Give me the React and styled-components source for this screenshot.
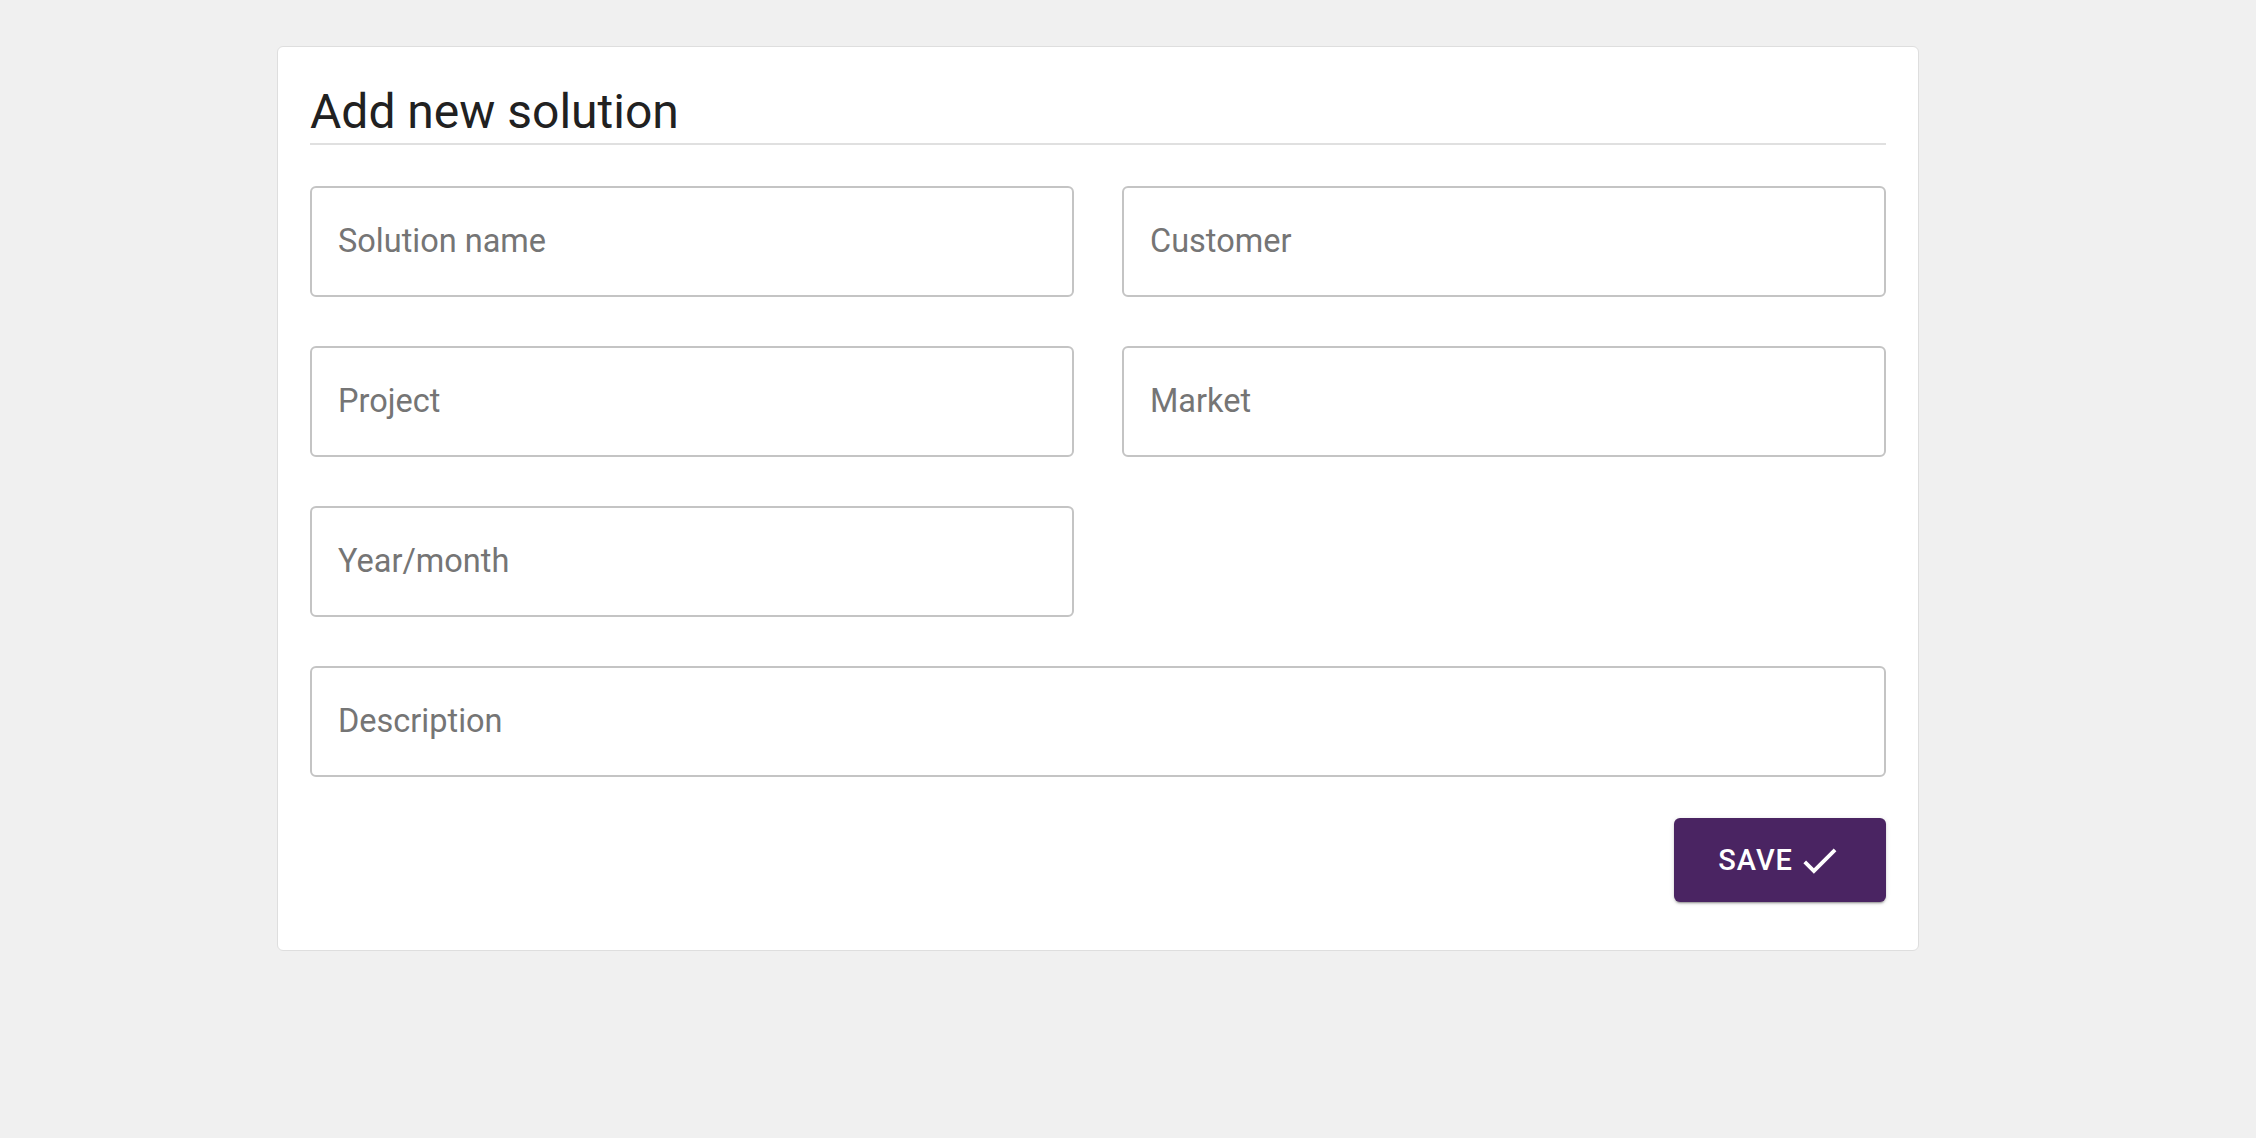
import React from 'react';
import styled, { createGlobalStyle } from 'styled-components';

const GlobalStyle = createGlobalStyle`
  body {
    margin: 0;
    background: #f0f0f0;
    font-family: Roboto, "Liberation Sans", sans-serif;
  }
`;

const Page = styled.div`
  padding: 46px 0 0 277px;
  min-height: 1138px;
  box-sizing: border-box;
`;

const Card = styled.div`
  width: 1642px;
  box-sizing: border-box;
  background: #fff;
  border: 1px solid #dedede;
  border-radius: 6px;
  padding: 37px 32px 48px 32px;
  display: flex;
  flex-direction: column;
`;

const Title = styled.h1`
  margin: 0;
  font-size: 48px;
  line-height: 56px;
  font-weight: 400;
  color: #212121;
  padding-bottom: 3px;
  border-bottom: 2px solid #e0e0e0;
`;

const FieldGrid = styled.div`
  display: grid;
  grid-template-columns: 1fr 1fr;
  column-gap: 48px;
  row-gap: 49px;
  margin-top: 41px;
`;

const Field = styled.div`
  grid-column: ${props => (props.wide ? '1 / span 2' : 'auto')};
  height: 111px;
  box-sizing: border-box;
  border: 2px solid #c4c4c4;
  border-radius: 6px;
  display: flex;
  align-items: center;
  padding: 0 26px 2px 26px;
  font-size: 32.5px;
  color: #757575;
`;

const Actions = styled.div`
  display: flex;
  justify-content: flex-end;
  margin-top: 41px;
`;

const SaveButton = styled.button`
  display: flex;
  align-items: center;
  gap: 4px;
  height: 84px;
  padding: 0 44px 0 44px;
  border: none;
  border-radius: 6px;
  background: #4a2462;
  color: #fff;
  font-family: Roboto, "Liberation Sans", sans-serif;
  font-size: 29px;
  font-weight: 500;
  letter-spacing: 1px;
  box-shadow: 0 3px 1px -2px rgba(0, 0, 0, 0.2), 0 2px 2px 0 rgba(0, 0, 0, 0.14),
    0 1px 5px 0 rgba(0, 0, 0, 0.12);
  cursor: pointer;

  svg {
    width: 45px;
    height: 45px;
    fill: #fff;
  }
`;

const fields = [
  { label: 'Solution name' },
  { label: 'Customer' },
  { label: 'Project' },
  { label: 'Market' },
  { label: 'Year/month' },
  { label: 'Description', wide: true },
];

export default function App() {
  return (
    <Page>
      <GlobalStyle />
      <Card>
        <Title>Add new solution</Title>
        <FieldGrid>
          {fields.map(f => (
            <Field key={f.label} wide={f.wide}>
              {f.label}
            </Field>
          ))}
        </FieldGrid>
        <Actions>
          <SaveButton>
            SAVE
            <svg viewBox="0 0 24 24">
              <path d="M9 16.17L4.83 12l-1.42 1.41L9 19 21 7l-1.41-1.41z" />
            </svg>
          </SaveButton>
        </Actions>
      </Card>
    </Page>
  );
}
